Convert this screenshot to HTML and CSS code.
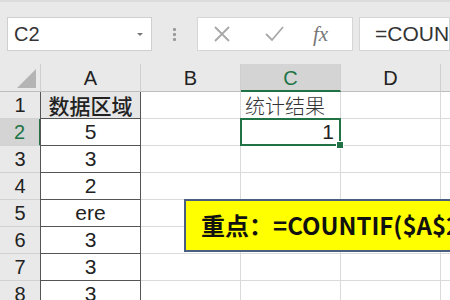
FILE: index.html
```html
<!DOCTYPE html>
<html lang="zh">
<head>
<meta charset="utf-8">
<link rel="stylesheet" href="styles.css">
</head>
<body>
<div class="app">
  <div class="toolbar">
    <div class="namebox"><span class="ref">C2</span><span class="caret"></span></div>
    <div class="dots"><i></i><i></i><i></i></div>
    <div class="btns">
      <svg class="ico x" width="20" height="20" viewBox="0 0 20 20"><path d="M3 3 L17 17 M17 3 L3 17" stroke="#a8a8a8" stroke-width="1.8" fill="none"/></svg>
      <svg class="ico ok" width="22" height="20" viewBox="0 0 22 20"><path d="M3 10 L9 16 L20 3" stroke="#a8a8a8" stroke-width="1.8" fill="none"/></svg>
      <span class="fx">fx</span>
    </div>
    <div class="formula">=COUNTIF($A$2:$A$8,"*")</div>
  </div>
  <div class="sheet">
    <div class="corner"></div>
    <div class="colh">A</div>
    <div class="colh">B</div>
    <div class="colh sel">C</div>
    <div class="colh">D</div>
    <div class="colh">E</div>

    <div class="rowh">1</div>
    <div class="cell a head">数据区域</div>
    <div class="cell"></div>
    <div class="cell left">统计结果</div>
    <div class="cell"></div>
    <div class="cell"></div>

    <div class="rowh sel">2</div>
    <div class="cell a">5</div>
    <div class="cell"></div>
    <div class="cell right active">1</div>
    <div class="cell"></div>
    <div class="cell"></div>

    <div class="rowh">3</div>
    <div class="cell a">3</div>
    <div class="cell"></div>
    <div class="cell"></div>
    <div class="cell"></div>
    <div class="cell"></div>

    <div class="rowh">4</div>
    <div class="cell a">2</div>
    <div class="cell"></div>
    <div class="cell"></div>
    <div class="cell"></div>
    <div class="cell"></div>

    <div class="rowh">5</div>
    <div class="cell a">ere</div>
    <div class="cell"></div>
    <div class="cell"></div>
    <div class="cell"></div>
    <div class="cell"></div>

    <div class="rowh">6</div>
    <div class="cell a">3</div>
    <div class="cell"></div>
    <div class="cell"></div>
    <div class="cell"></div>
    <div class="cell"></div>

    <div class="rowh">7</div>
    <div class="cell a">3</div>
    <div class="cell"></div>
    <div class="cell"></div>
    <div class="cell"></div>
    <div class="cell"></div>

    <div class="rowh">8</div>
    <div class="cell a">3</div>
    <div class="cell"></div>
    <div class="cell"></div>
    <div class="cell"></div>
    <div class="cell"></div>

    <div class="note">重点：=COUNTIF($A$2:$A$8,"*")</div>
  </div>
</div>
</body>
</html>
```

FILE: styles.css
```css
* { box-sizing: border-box; }
html, body { margin: 0; padding: 0; background: #fff; }
body { font-family: "Liberation Sans", Arial, "Noto Sans CJK SC", sans-serif; color: #222; }
.app { width: 450px; height: 300px; overflow: hidden; }

.toolbar {
  height: 64px;
  background: #e9e9e9;
  border-top: 2px solid #dcdcdc;
  display: flex;
  align-items: flex-start;
  padding-top: 15px;
  padding-left: 7px;
}
.namebox {
  width: 145px; height: 34px;
  background: #fff;
  border: 1px solid #cfcfcf;
  display: flex; align-items: center; justify-content: space-between;
  padding: 0 8px 0 6px;
}
.ref { font-size: 20px; color: #333; }
.caret {
  width: 0; height: 0;
  border-left: 3px solid transparent; border-right: 3px solid transparent;
  border-top: 3px solid #777;
}
.dots { width: 45px; height: 34px; display: flex; flex-direction: column; align-items: center; justify-content: center; gap: 2px; }
.dots i { width: 3px; height: 3px; background: #9a9a9a; border-radius: 1px; display: block; }
.btns {
  width: 156px; height: 34px; background: #fff; border: 1px solid #d6d6d6;
  display: flex; align-items: center; padding-left: 14px;
}
.ico.x { margin-right: 31px; }
.ico.ok { margin-right: 28px; }
.fx { font-family: "Liberation Serif", serif; font-style: italic; font-size: 21px; color: #777; }
.formula {
  margin-left: 6px; flex: 1; height: 34px; background: #fff; border: 1px solid #d6d6d6;
  font-size: 21px; color: #333; padding-left: 15px; line-height: 32px; white-space: nowrap; overflow: hidden;
}

.sheet {
  position: relative;
  display: grid;
  grid-template-columns: 41px 100px 100px 100px 100px 100px;
  grid-template-rows: 28px repeat(8, 27px);
  background: #fff;
}
.corner {
  background: #e9e9e9;
  border-right: 1px solid #cfcfcf; border-bottom: 1px solid #bdbdbd;
  position: relative;
}
.corner::after {
  content: ""; position: absolute; right: 4px; bottom: 3px;
  width: 0; height: 0;
  border-left: 19px solid transparent; border-bottom: 19px solid #b4b4b4;
}
.colh {
  background: #e9e9e9; border-right: 1px solid #cfcfcf; border-bottom: 1px solid #bdbdbd;
  display: flex; align-items: center; justify-content: center;
  font-size: 20px; color: #222; padding-top: 2px;
}
.colh.sel { background: #d4d4d4; border-bottom: 2px solid #217346; color: #217346; }
.rowh {
  background: #e9e9e9; border-right: 1px solid #bdbdbd; border-bottom: 1px solid #d2d2d2;
  display: flex; align-items: center; justify-content: center;
  font-size: 20px; color: #222;
}
.rowh.sel { background: #d4d4d4; color: #217346; border-right: 2px solid #217346; }
.cell {
  border-right: 1px solid #dadada; border-bottom: 1px solid #dadada;
  font-size: 21px; display: flex; align-items: center; white-space: nowrap;
}
.cell.a {
  justify-content: center;
  border-left: 1px solid #555; border-right: 1px solid #555; border-bottom: 1px solid #555;
  margin-left: -1px;
}
.cell.head { background: #e6e6e6; font-family: "Noto Sans CJK SC", sans-serif; font-size: 21px; font-weight: 500; color: #222; }
.cell.left { padding-left: 4px; font-family: "Noto Sans CJK SC", sans-serif; color: #333; font-weight: 300; font-size: 20px; }
.cell.right { justify-content: flex-end; padding-right: 5px; }
.cell.active { position: relative; border: 2px solid #217346; margin: -1px 0 0 -1px; }
.cell.active::after {
  content: ""; position: absolute; right: -5px; bottom: -5px;
  width: 6px; height: 6px; background: #217346; border: 1px solid #fff;
}
.note {
  position: absolute; left: 184px; top: 135px;
  width: 300px; height: 53px;
  background: #ffff00; border: 2px solid #4a5f80;
  font-family: "Noto Sans CJK SC", sans-serif; font-weight: bold; font-size: 24px; color: #111;
  padding-left: 15px; line-height: 48px; white-space: nowrap;
}
```
